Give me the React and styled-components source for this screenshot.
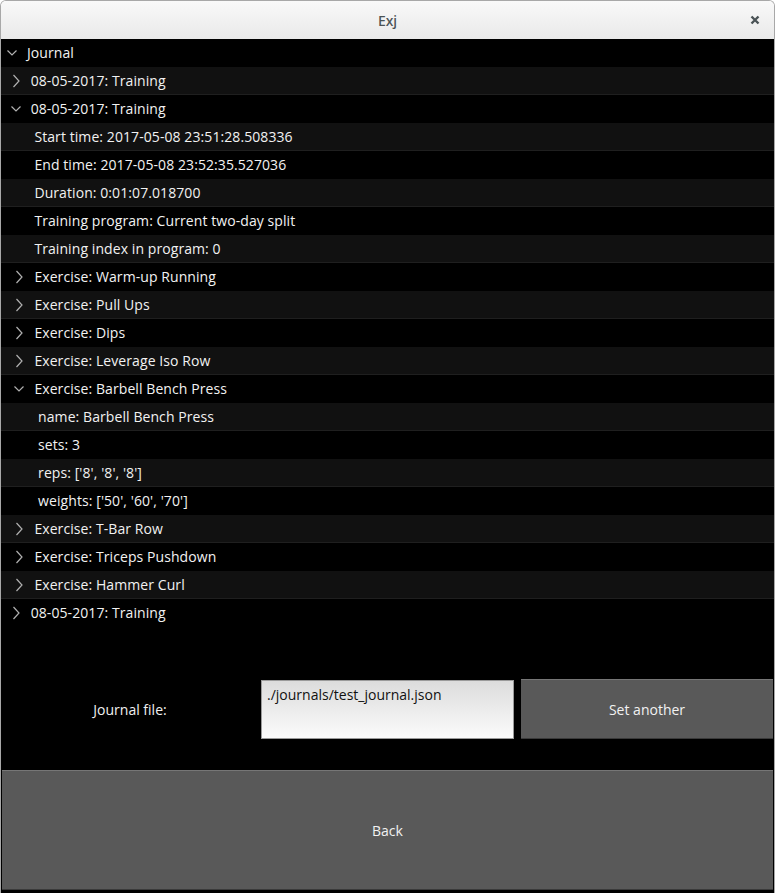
import React from "react";
import styled, { createGlobalStyle } from "styled-components";

const GlobalStyle = createGlobalStyle`
  html, body {
    margin: 0;
    padding: 0;
    background: #ffffff;
  }
  body {
    font-family: "Open Sans", "Noto Sans", sans-serif;
  }
`;

// tree rows: level, kind = open | closed | leaf
const rows = [
  { level: 0, kind: "open", text: "Journal" },
  { level: 1, kind: "closed", text: "08-05-2017: Training" },
  { level: 1, kind: "open", text: "08-05-2017: Training" },
  { level: 2, kind: "leaf", text: "Start time: 2017-05-08 23:51:28.508336" },
  { level: 2, kind: "leaf", text: "End time: 2017-05-08 23:52:35.527036" },
  { level: 2, kind: "leaf", text: "Duration: 0:01:07.018700" },
  { level: 2, kind: "leaf", text: "Training program: Current two-day split" },
  { level: 2, kind: "leaf", text: "Training index in program: 0" },
  { level: 2, kind: "closed", text: "Exercise: Warm-up Running" },
  { level: 2, kind: "closed", text: "Exercise: Pull Ups" },
  { level: 2, kind: "closed", text: "Exercise: Dips" },
  { level: 2, kind: "closed", text: "Exercise: Leverage Iso Row" },
  { level: 2, kind: "open", text: "Exercise: Barbell Bench Press" },
  { level: 3, kind: "leaf", text: "name: Barbell Bench Press" },
  { level: 3, kind: "leaf", text: "sets: 3" },
  { level: 3, kind: "leaf", text: "reps: ['8', '8', '8']" },
  { level: 3, kind: "leaf", text: "weights: ['50', '60', '70']" },
  { level: 2, kind: "closed", text: "Exercise: T-Bar Row" },
  { level: 2, kind: "closed", text: "Exercise: Triceps Pushdown" },
  { level: 2, kind: "closed", text: "Exercise: Hammer Curl" },
  { level: 1, kind: "closed", text: "08-05-2017: Training" },
];

const Window = styled.div`
  width: 775px;
  height: 893px;
  display: flex;
  flex-direction: column;
  box-sizing: border-box;
  overflow: hidden;
  border-radius: 6px 6px 0 0;
  border: 1px solid #a8a8a8;
  border-bottom: none;
`;

const TitleBar = styled.div`
  height: 38px;
  flex: none;
  display: flex;
  align-items: center;
  justify-content: center;
  position: relative;
  background: linear-gradient(#f9f9f9, #e9e9e9);
  color: #4a5254;
  font-family: "Noto Sans", "DejaVu Sans", sans-serif;
  font-size: 14px;
  font-weight: 500;
`;

const CloseBtn = styled.div`
  position: absolute;
  right: 14px;
  top: 14px;
  width: 10px;
  height: 10px;
  display: flex;
`;

const Body = styled.div`
  flex: 1;
  display: flex;
  flex-direction: column;
  background: #000;
`;

const Tree = styled.div`
  flex: 1;
  display: flex;
  flex-direction: column;
`;

const Row = styled.div`
  height: 28px;
  flex: none;
  box-sizing: border-box;
  display: flex;
  align-items: center;
  padding-left: ${(p) => 4 + p.$level * 3.7}px;
  background: ${(p) => (p.$odd ? "#111111" : "#000000")};
  border-bottom: 1px solid ${(p) => (p.$odd ? "#1f1f1f" : "#000000")};
  color: #f2f2f2;
  font-size: 14px;
  letter-spacing: 0.08px;
  white-space: nowrap;
`;

const Toggle = styled.span`
  width: 14px;
  height: 14px;
  flex: none;
  display: flex;
  align-items: center;
  justify-content: center;
  margin-right: 8px;
`;

const FileRow = styled.div`
  height: 60px;
  flex: none;
  margin-bottom: 31px;
  padding-left: 1px;
  display: flex;
  align-items: stretch;
`;

const Label = styled.div`
  width: 256px;
  display: flex;
  align-items: center;
  justify-content: center;
  color: #f0f0f0;
  font-size: 14px;
`;

const PathInput = styled.div`
  width: 253px;
  box-sizing: border-box;
  margin: 1px 0 0 3px;
  padding: 4px 5px;
  border: 1px solid #9a9a9a;
  background: linear-gradient(#dcdcdc, #fbfbfb);
  color: #111;
  font-size: 14px;
`;

const Button = styled.div`
  box-sizing: border-box;
  display: flex;
  align-items: center;
  justify-content: center;
  background: #595959;
  border-top: 1px solid #767676;
  border-bottom: 1px solid #3a3a3a;
  color: #f2f2f2;
  font-size: 14px;
  width: ${(p) => p.$w || "auto"};
  height: ${(p) => p.$h || "auto"};
  margin-left: ${(p) => p.$ml || "0"};
`;

const BackWrap = styled.div`
  flex: none;
  padding: 0 1px 3px 1px;
`;

function Chevron({ open }) {
  return (
    <svg width="14" height="14" viewBox="0 0 14 14">
      {open ? (
        <path d="M2.5 4.5 L7 9 L11.5 4.5" fill="none" stroke="#b0b0b0" strokeWidth="1.2" />
      ) : (
        <path d="M4.5 1 L10 7 L4.5 13" fill="none" stroke="#b0b0b0" strokeWidth="1.2" />
      )}
    </svg>
  );
}

export default function App() {
  return (
    <Window>
      <GlobalStyle />
      <TitleBar>
        Exj
        <CloseBtn>
          <svg width="10" height="10" viewBox="0 0 10 10">
            <path d="M1.5 1.5 L8.5 8.5 M8.5 1.5 L1.5 8.5" stroke="#4a5356" strokeWidth="2.4" />
          </svg>
        </CloseBtn>
      </TitleBar>
      <Body>
        <Tree>
          {rows.map((r, i) => (
            <Row key={i} $level={r.level} $odd={i % 2 === 1}>
              <Toggle>{r.kind !== "leaf" && <Chevron open={r.kind === "open"} />}</Toggle>
              {r.text}
            </Row>
          ))}
        </Tree>
        <FileRow>
          <Label>Journal file:</Label>
          <PathInput>./journals/test_journal.json</PathInput>
          <Button $w="252px" $ml="7px">Set another</Button>
        </FileRow>
        <BackWrap>
          <Button $h="120px">Back</Button>
        </BackWrap>
      </Body>
    </Window>
  );
}
